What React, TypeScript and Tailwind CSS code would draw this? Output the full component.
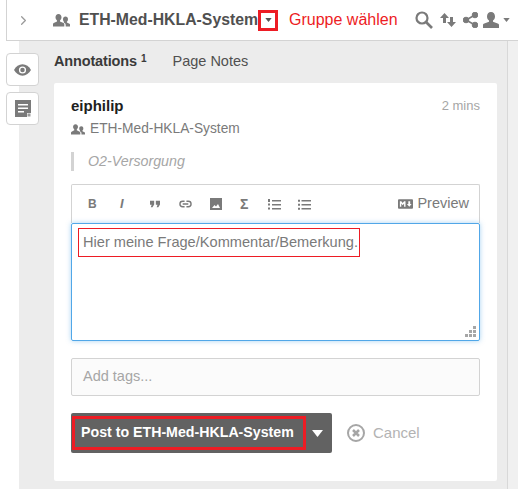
import { ChevronRight } from "lucide-react";

const font = { fontFamily: '"Liberation Sans", Arial, sans-serif' };

function GroupsIcon({ className }: { className: string }) {
  return (
    <svg viewBox="0 0 17 13" className={className} fill="currentColor">
      <path d="M5.500 0C7.300 0 8.500 1.400 8.500 3.300c0 1.300-.6 2.500-1.500 3.100v1l3.600 1.700c.5.300.7.600.7 1.100V12.500H0v-2.300c0-.5.200-.8.700-1.100L4 7.400v-1C3.100 5.800 2.500 4.600 2.500 3.300 2.500 1.400 3.700 0 5.500 0z" />
      <path d="M12.500 2.500c1.500 0 2.500 1.100 2.500 2.700 0 1-.4 1.900-1.100 2.500v.8l2.500 1.200c.4.200.6.500.6.900v1.900h-4.300v-1.600c0-.8-.4-1.400-1.100-1.800l-.7-.4V7.700C10.300 7.100 10 6.200 10 5.200c0-1.600 1-2.700 2.500-2.700z" />
    </svg>
  );
}

function Caret({ className }: { className: string }) {
  return (
    <svg viewBox="0 0 8 5" className={className} fill="currentColor">
      <path d="M0 0h8L4 5z" />
    </svg>
  );
}

function Toolbar() {
  return (
    <div className="flex h-[39px] items-center rounded-t-[2px] border border-b-0 border-[#d3d3d3] pl-[16px] pr-[10px] text-[#7a7a7a]">
      <span className="w-[32px] text-[12px] font-bold">B</span>
      <span className="w-[30px] text-[13px] font-bold italic">I</span>
      <svg viewBox="0 0 12 8" className="mr-[19px] h-[8px] w-[10px]" fill="currentColor">
        <path d="M0 0h5v4.500L3 8H1l1-3H0zM7 0h5v4.500L10 8H8l1-3H7z" />
      </svg>
      <svg viewBox="0 0 14 8" className="mr-[18px] h-[8px] w-[13px]" fill="none" stroke="currentColor" strokeWidth="1.500">
        <path d="M6 1H4a3 3 0 0 0 0 6h2M8 1h2a3 3 0 0 1 0 6H8M4 4h6" />
      </svg>
      <svg viewBox="0 0 12 12" className="mr-[18px] h-[12px] w-[12px]" fill="currentColor">
        <path d="M0 0h12v12H0z" />
        <path d="M2 10l2.500-3 1.500 1.500L8 6l2 4z" fill="#fff" />
      </svg>
      <span className="mr-[20px] text-[14px] font-bold leading-none">Σ</span>
      <svg viewBox="0 0 13 11" className="mr-[17px] h-[11px] w-[13px]" fill="currentColor">
        <path d="M4 1h9v1.400H4zM4 5h9v1.400H4zM4 9h9v1.400H4zM0 0h2v3H0zM0 4.500h2v2H0zM0 8.500h2v2H0z" />
      </svg>
      <svg viewBox="0 0 13 11" className="h-[11px] w-[13px]" fill="currentColor">
        <path d="M3.500 1H13v1.400H3.500zM3.500 5H13v1.400H3.500zM3.500 9H13v1.400H3.500zM0 .7h2v2H0zM0 4.700h2v2H0zM0 8.700h2v2H0z" />
      </svg>
      <div className="ml-auto flex items-center gap-[4px]">
        <svg viewBox="0 0 16 10" className="h-[10px] w-[15px]">
          <rect width="16" height="10" rx="1" fill="#7a7a7a" />
          <path d="M2 8V2h1.500L5 4l1.500-2H8v6H6.500V4.500L5 6.300 3.500 4.500V8zM11 2h2v3h1.500L12 8 9.500 5H11z" fill="#fff" />
        </svg>
        <span className="text-[14.5px] text-[#7a7a7a]">Preview</span>
      </div>
    </div>
  );
}

export default function App() {
  return (
    <div style={font} className="flex h-[489px] w-[518px] flex-col overflow-hidden bg-white pl-[6px]">
      {/* Top bar */}
      <div className="flex h-[41px] shrink-0 items-center border-b border-l border-[#d3d3d3] pl-[9px] text-[#7a7a7a]">
        <ChevronRight size={15} strokeWidth={2} className="text-[#9a9a9a]" />
        <GroupsIcon className="ml-[22px] h-[13px] w-[17px] text-[#7a7a7a]" />
        <span className="ml-[9px] text-[15.8px] font-bold text-[#505050]">ETH-Med-HKLA-System</span>
        <span className="flex h-[21px] w-[20px] shrink-0 items-center justify-center border-[3px] border-[#ed1c24]">
          <Caret className="h-[4px] w-[7px] text-[#555555]" />
        </span>
        <span className="ml-[11px] shrink-0 text-[16px] text-[#ed1c24]">Gruppe wählen</span>
        <svg viewBox="0 0 18 18" className="ml-[17px] h-[18px] w-[18px] shrink-0" fill="none" stroke="#7a7a7a">
          <circle cx="7" cy="7" r="5.500" strokeWidth="2.200" />
          <path d="M11 11l6 6" strokeWidth="2.600" />
        </svg>
        <svg viewBox="0 0 16 16" className="ml-[7px] h-[16px] w-[16px] shrink-0" fill="#7a7a7a">
          <path d="M4.500 1L9 6H6v5H3V6H0zM11.500 15L7 10h3V5h3v5h3z" />
        </svg>
        <svg viewBox="0 0 15 16" className="ml-[7px] h-[16px] w-[15px] shrink-0" fill="#7a7a7a" stroke="#7a7a7a">
          <circle cx="3" cy="8" r="2.800" />
          <circle cx="12" cy="3" r="2.800" />
          <circle cx="12" cy="13" r="2.800" />
          <path d="M3 8l9-5M3 8l9 5" strokeWidth="1.600" fill="none" />
        </svg>
        <svg viewBox="0 0 16 16" className="ml-[5px] h-[16px] w-[16px] shrink-0" fill="#7a7a7a">
          <path d="M8 0c2.500 0 4 1.900 4 4.400 0 1.700-.8 3.300-2 4.100v1.300l4.700 1.800c.8.300 1.300.8 1.300 1.600V16H0v-2.800c0-.8.500-1.300 1.300-1.600L6 9.800V8.500C4.800 7.700 4 6.100 4 4.400 4 1.900 5.500 0 8 0z" />
        </svg>
        <Caret className="ml-[4px] h-[4px] w-[7px] shrink-0 text-[#7a7a7a]" />
      </div>

      <div className="relative flex min-h-0 flex-1">
        {/* Side buttons */}
        <div className="absolute left-0 top-[12px] flex flex-col gap-[6px]">
          <div className="flex h-[33px] w-[33px] items-center justify-center rounded-[4px] border border-[#d3d3d3] bg-white">
            <svg viewBox="0 0 18 12" className="h-[12px] w-[17px]">
              <path d="M0 6c2-3.600 5.300-6 9-6s7 2.400 9 6c-2 3.600-5.300 6-9 6S2 9.600 0 6z" fill="#7a7a7a" />
              <circle cx="9" cy="6" r="3.800" fill="#fff" />
              <circle cx="9" cy="6" r="2.400" fill="#7a7a7a" />
            </svg>
          </div>
          <div className="flex h-[33px] w-[33px] items-center justify-center rounded-[4px] border border-[#d3d3d3] bg-white">
            <svg viewBox="0 0 16 17" className="h-[17px] w-[16px]">
              <path d="M0 0h16v17H0z" fill="#7a7a7a" />
              <path d="M3 4h10v1.500H3zM3 7.500h10V9H3zM3 11h6v1.500H3zM12 13h4v4h-4z" fill="#fff" />
              <path d="M12.500 13.500h3v3h-3z" fill="#9a9a9a" />
            </svg>
          </div>
        </div>

        <div className="ml-[13px] flex w-[488px] shrink-0 flex-col bg-[#ececec] pl-[35px] pr-[10px]">
          {/* Tabs */}
          <div className="flex h-[42px] shrink-0 items-center text-[14.5px] text-[#3a3a3a]">
            <span className="font-bold tracking-[-0.15px]">Annotations</span>
            <sup className="top-[-3px] ml-[4px] text-[10px] font-bold">1</sup>
            <span className="ml-[26px] text-[#505050]">Page Notes</span>
          </div>

          {/* Card */}
          <div className="flex h-[398px] shrink-0 flex-col rounded-[2px] bg-white px-[17px] pt-[14px]">
            <div className="flex h-[18px] items-center justify-between">
              <span className="text-[15px] font-bold text-[#202020]">eiphilip</span>
              <span className="text-[13px] text-[#a6a6a6]">2 mins</span>
            </div>
            <div className="mt-[6px] flex h-[16px] items-center gap-[5px] text-[13.75px] text-[#7a7a7a]">
              <GroupsIcon className="h-[11px] w-[14px]" />
              <span>ETH-Med-HKLA-System</span>
            </div>
            <div className="mt-[15px] h-[19px] border-l-[3px] border-[#d3d3d3] pl-[14px] text-[14.25px] italic leading-[19px] text-[#a6a6a6]">
              O2-Versorgung
            </div>

            <div className="mt-[13px]">
              <Toolbar />
              <div className="relative h-[118px] rounded-[2px] border border-[#51a7e8] pl-[6px] pt-[4px] shadow-[0_0_5px_rgba(81,167,232,0.5)]">
                <span className="inline-block h-[29px] border border-[#ed1c24] pl-[4px] pr-[1px] text-[14.6px] leading-[27px] text-[#7a7a7a]">
                  Hier meine Frage/Kommentar/Bemerkung.
                </span>
                <svg viewBox="0 0 11 11" className="absolute bottom-[3px] right-[3px] h-[11px] w-[11px]" fill="#a6a6a6">
                  <path d="M8 0h3v3H8zM4 4h3v3H4zM8 4h3v3H8zM0 8h3v3H0zM4 8h3v3H4zM8 8h3v3H8z" />
                </svg>
              </div>
            </div>

            <div className="mt-[17px] flex h-[38px] items-center rounded-[2px] border border-[#d3d3d3] bg-[#fbfbfb] px-[11px] text-[14.5px] text-[#a6a6a6]">
              Add tags...
            </div>

            <div className="mt-[17px] flex items-center">
              <div className="flex h-[40px] w-[261px] items-center rounded-[2px] bg-[#626262] pl-[1px]">
                <span className="flex h-[34px] w-[234px] shrink-0 items-center whitespace-nowrap border-[3px] border-[#ed1c24] pl-[6px] text-[14.2px] font-bold text-white">
                  Post to ETH-Med-HKLA-System
                </span>
                <Caret className="ml-[6px] h-[7px] w-[11px] text-white" />
              </div>
              <svg viewBox="0 0 18 18" className="ml-[15px] h-[18px] w-[18px]" fill="none" stroke="#a6a6a6" strokeWidth="2">
                <circle cx="9" cy="9" r="8" />
                <path d="M6 6l6 6M12 6l-6 6" strokeWidth="2.500" />
              </svg>
              <span className="ml-[8px] text-[15px] text-[#b3b3b3]">Cancel</span>
            </div>
          </div>
        </div>
        <div className="ml-0 w-[1px] shrink-0 bg-[#d8d8d8]" />
        <div className="flex-1 bg-[#f0f0f0]" />
      </div>
    </div>
  );
}
